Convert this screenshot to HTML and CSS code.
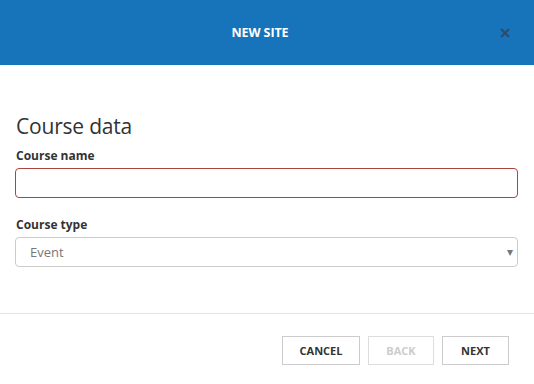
FILE: index.html
```html
<!DOCTYPE html>
<html lang="en">
<head>
    <meta charset="UTF-8">
    <meta name="viewport" content="width=device-width, initial-scale=1.0">
    <title>New site</title>
    <link rel="stylesheet" href="styles.css">
</head>
<body>
    <div class="modal">
        <div class="modal-header">
            <h1>NEW SITE</h1>
            <button class="close-btn" aria-label="Close">
                <svg width="10" height="10" viewBox="0 0 10 10">
                    <path d="M1 1L9 9M9 1L1 9" stroke="currentColor" stroke-width="2"/>
                </svg>
            </button>
        </div>

        <div class="modal-body">
            <h2>Course data</h2>
            <div class="field">
                <label for="courseName">Course name</label>
                <input type="text" id="courseName" class="invalid">
            </div>
            <div class="field">
                <label for="courseType">Course type</label>
                <div class="select-wrap">
                    <select id="courseType">
                        <option>Event</option>
                    </select>
                </div>
            </div>
        </div>

        <div class="modal-footer">
            <button class="btn btn-cancel">CANCEL</button>
            <button class="btn btn-back" disabled>BACK</button>
            <button class="btn btn-next">NEXT</button>
        </div>
    </div>
</body>
</html>
```

FILE: styles.css
```css
body {
    margin: 0;
    font-family: "Open Sans", Arial, sans-serif;
    background-color: #fff;
    color: #333;
}

.modal-header {
    display: flex;
    align-items: center;
    height: 65px;
    background-color: #1874ba;
    padding: 0 19px 0 25px;
}

.modal-header h1 {
    flex: 1;
    margin: 0;
    text-align: center;
    color: #fff;
    font-size: 12.5px;
    font-weight: 700;
    letter-spacing: -0.1px;
}

.close-btn {
    display: flex;
    align-items: center;
    justify-content: center;
    width: 20px;
    height: 20px;
    padding: 0;
    border: none;
    background: none;
    color: #2c4a69;
    cursor: pointer;
}

.modal-body {
    padding: 49px 16px 46px 15px;
    border-bottom: 1px solid #e5e5e5;
}

.modal-body h2 {
    margin: 0 0 8px 1px;
    font-size: 21px;
    font-weight: 400;
    line-height: 1.2;
    letter-spacing: -0.2px;
}

.field {
    margin-bottom: 18px;
}

.field:last-child {
    margin-bottom: 0;
}

.field label {
    display: block;
    margin: 0 0 4px 1px;
    font-size: 12px;
    font-weight: 700;
}

.field input,
.field select {
    display: block;
    width: 100%;
    height: 30px;
    box-sizing: border-box;
    border: 1px solid #ccc;
    border-radius: 4px;
    background-color: #fff;
    font-family: inherit;
    font-size: 13px;
}

.field input.invalid {
    border-color: #a94442;
}

.select-wrap {
    position: relative;
}

.select-wrap select {
    appearance: none;
    padding: 0 14px;
    color: #777;
}

.select-wrap::after {
    content: "\25BE";
    position: absolute;
    right: 5px;
    top: 6px;
    color: #777;
    font-size: 12px;
    pointer-events: none;
}

.modal-footer {
    display: flex;
    justify-content: flex-end;
    gap: 8px;
    padding: 22px 25px 20px;
}

.btn {
    height: 29px;
    padding: 0;
    background-color: #fff;
    border: 1px solid #ccc;
    font-family: inherit;
    font-size: 11px;
    font-weight: 700;
    color: #333;
    cursor: pointer;
}

.btn-cancel {
    width: 78px;
}

.btn-back {
    width: 66px;
}

.btn-next {
    width: 67px;
}

.btn:disabled {
    color: #ccc;
    border-color: #ddd;
    cursor: default;
}
```
